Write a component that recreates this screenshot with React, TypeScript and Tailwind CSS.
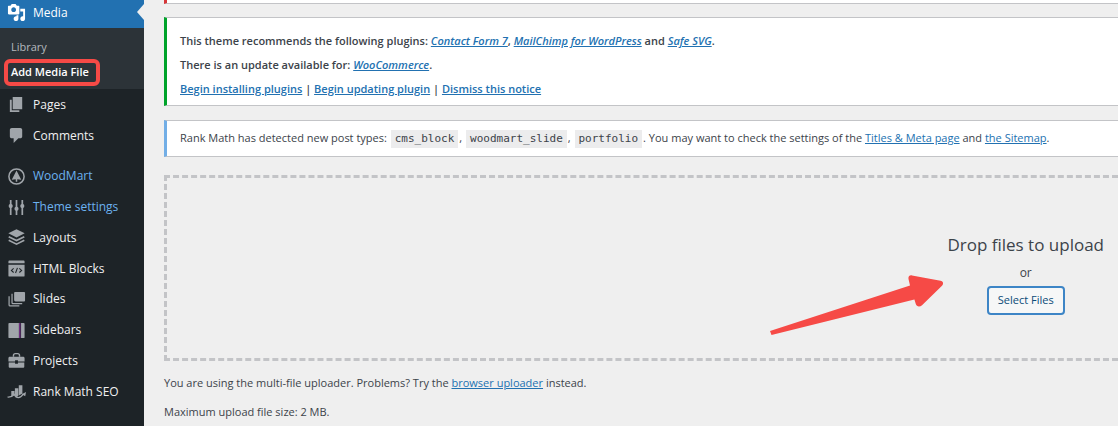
import React from 'react'
import clsx from 'clsx'

interface MenuItem {
  label: string
  icon: React.ReactNode
  highlighted?: boolean
}

interface NoticeProps {
  className?: string
  children?: React.ReactNode
}

const Icon: React.FC<{ children: React.ReactNode }> = ({ children }) => (
  <svg
    viewBox="0 0 20 20"
    className="size-[19px] shrink-0"
    fill="currentColor"
    aria-hidden="true"
  >
    {children}
  </svg>
)

const MediaIcon = () => (
  <Icon>
    <path d="M13 11V4c0-.55-.45-1-1-1h-1.67L9 1H5L3.67 3H2c-.55 0-1 .45-1 1v7c0 .55.45 1 1 1h10c.55 0 1-.45 1-1zM7 4.5c1.38 0 2.5 1.12 2.5 2.5S8.38 9.5 7 9.5 4.5 8.38 4.5 7 5.62 4.5 7 4.5zM14 6h5v10.5c0 1.38-1.12 2.5-2.5 2.5S14 17.88 14 16.5s1.12-2.5 2.5-2.5c.17 0 .34.02.5.05V9h-3V6zm-4 8.05V13h2v3.5c0 1.38-1.12 2.5-2.5 2.5S7 17.88 7 16.5 8.12 14 9.5 14c.17 0 .34.02.5.05z" />
  </Icon>
)

const contentItems: MenuItem[] = [
  {
    label: 'Pages',
    icon: (
      <Icon>
        <path d="M6 15V2h10v13H6zm-1 1h8v2H3V5h2v11z" />
      </Icon>
    ),
  },
  {
    label: 'Comments',
    icon: (
      <Icon>
        <path d="M5 2h9c1.1 0 2 .9 2 2v7c0 1.1-.9 2-2 2h-2l-5 5v-5H5c-1.1 0-2-.9-2-2V4c0-1.1.9-2 2-2z" />
      </Icon>
    ),
  },
]

const themeItems: MenuItem[] = [
  {
    label: 'WoodMart',
    highlighted: true,
    icon: (
      <Icon>
        <circle
          cx="10"
          cy="10"
          r="8"
          fill="none"
          stroke="currentColor"
          strokeWidth="1.6"
        />
        <path d="M10 3.6 5 13.4l4.2-.6v2.7h1.6v-2.7l4.2.6z" />
      </Icon>
    ),
  },
  {
    label: 'Theme settings',
    highlighted: true,
    icon: (
      <Icon>
        <path d="M3 2h1.8v4.2a2.4 2.4 0 0 1 0 4.2V18H3v-7.6a2.4 2.4 0 0 1 0-4.2zM9.1 2h1.8v7.2a2.4 2.4 0 0 1 0 4.2V18H9.1v-4.6a2.4 2.4 0 0 1 0-4.2zM15.2 2H17v4.2a2.4 2.4 0 0 1 0 4.2V18h-1.8v-7.6a2.4 2.4 0 0 1 0-4.2z" />
      </Icon>
    ),
  },
  {
    label: 'Layouts',
    icon: (
      <Icon>
        <path d="M10 1.2 18.6 5.6 10 10 1.4 5.6z" />
        <path
          d="M1.8 9.2 10 13.3l8.2-4.1M1.8 12.9 10 17l8.2-4.1"
          fill="none"
          stroke="currentColor"
          strokeWidth="1.8"
        />
      </Icon>
    ),
  },
  {
    label: 'HTML Blocks',
    icon: (
      <Icon>
        <path d="M2.5 1.5h15a1 1 0 0 1 1 1v2h-17v-2a1 1 0 0 1 1-1zM1.5 6h17v11.5a1 1 0 0 1-1 1h-15a1 1 0 0 1-1-1z" />
        <path
          d="M7 9.8 4.6 12 7 14.2M13 9.8l2.4 2.2-2.4 2.2M11 9.3l-2 5.4"
          fill="none"
          stroke="#1d2327"
          strokeWidth="1.1"
        />
      </Icon>
    ),
  },
  {
    label: 'Slides',
    icon: (
      <Icon>
        <path d="M8.5 2H18a1 1 0 0 1 1 1v8a1 1 0 0 1-1 1H9a1.5 1.5 0 0 1-1.500-1.500V3a1 1 0 0 1 1-1z" />
        <path
          d="M5.3 4v9.3a1 1 0 0 0 1 1H16M2.2 6.500v9.300a1 1 0 0 0 1 1H13"
          fill="none"
          stroke="currentColor"
          strokeWidth="1.3"
        />
      </Icon>
    ),
  },
  {
    label: 'Sidebars',
    icon: (
      <Icon>
        <path d="M2.5 2h10v16h-10a1 1 0 0 1-1-1V3a1 1 0 0 1 1-1zM14.800 2h2.700a1 1 0 0 1 1 1v14a1 1 0 0 1-1 1h-2.700z" />
        <path d="M12.900 2h1.200v16h-1.200z" fill="#8a2f9c" />
      </Icon>
    ),
  },
  {
    label: 'Projects',
    icon: (
      <Icon>
        <path
          d="M6.8 6V4.800c0-1.200 1-2 2-2h2.400c1 0 2 .8 2 2V6"
          fill="none"
          stroke="currentColor"
          strokeWidth="1.5"
        />
        <path d="M3 6h14c.9 0 1.5.6 1.5 1.500V11h-7V9.800h-3V11h-7V7.500C1.500 6.600 2.100 6 3 6zM1.800 12h6.700v1.300h3V12h6.700v4.500c0 .6-.4 1-1 1H2.800c-.6 0-1-.4-1-1z" />
      </Icon>
    ),
  },
  {
    label: 'Rank Math SEO',
    icon: (
      <Icon>
        <path d="M4.500 9.500h3.400v4l-3.400 1.500zM8.300 6.500h3.600v8L10 15.800l-1.700-1.500zM12.400 3.500h3.800v8.700l-3.800 2z" />
        <path
          d="M.5 15.800c3.500.4 5.300-.6 7.200-2.600 1 2.400 2.700 3.300 4.300 3.300 2.600 0 3.800-1.800 5.200-4"
          fill="none"
          stroke="currentColor"
          strokeWidth="1.3"
        />
        <path d="m15.500 12.800 4.500-2.300-.8 4.500z" />
      </Icon>
    ),
  },
]

const TextLink: React.FC<{ children: React.ReactNode }> = ({ children }) => (
  <a href="#" className="text-[#2271b1] underline">
    {children}
  </a>
)

const PostType: React.FC<{ children: React.ReactNode }> = ({ children }) => (
  <code className="mx-px inline-block bg-[#ececed] px-1 font-['DejaVu_Sans_Mono',monospace] text-[11px] leading-[18px]">
    {children}
  </code>
)

const Notice: React.FC<NoticeProps> = ({ className, children }) => (
  <div
    className={clsx(
      'border-y border-l-3 border-y-[#c3c4c7] bg-white px-[13px]',
      className,
    )}
  >
    {children}
  </div>
)

const MenuLink: React.FC<{ item: MenuItem }> = ({ item }) => (
  <li className="flex">
    <a href="#" className="flex flex-1 items-center gap-[7px] pl-[7px]">
      <span className="text-[#a0a5aa]">{item.icon}</span>
      <span className={item.highlighted ? 'text-[#6cb2f0]' : 'text-[#f0f0f1]'}>
        {item.label}
      </span>
    </a>
  </li>
)

const Sidebar = () => (
  <nav
    aria-label="Main menu"
    className="w-36 shrink-0 bg-[#1d2327] text-xs leading-[18px]"
  >
    <a
      href="#"
      className="relative flex h-7 items-center gap-[7px] bg-[#2271b1] pb-[3px] pl-[7px] text-white"
    >
      <MediaIcon />
      Media
      <span className="absolute top-1 right-0 border-y-8 border-r-7 border-y-transparent border-r-[#efefef]" />
    </a>
    <ul className="bg-[#2c3338] pt-[6px] pb-[5px] text-[11px]">
      <li className="flex h-[25px] items-center pl-[11px]">
        <a href="#" className="text-[#b4b9be]">
          Library
        </a>
      </li>
      <li className="relative flex h-[25px] items-center pl-[11px]">
        <a href="#" className="font-semibold text-white">
          Add Media File
        </a>
        <span className="pointer-events-none absolute top-0 left-1 h-[27px] w-24 rounded-md border-4 border-[#f64a46]" />
      </li>
    </ul>
    <ul className="grid h-[62px] auto-rows-fr">
      {contentItems.map((item) => (
        <MenuLink key={item.label} item={item} />
      ))}
    </ul>
    <ul className="mt-[10px] grid h-[246px] auto-rows-fr">
      {themeItems.map((item) => (
        <MenuLink key={item.label} item={item} />
      ))}
    </ul>
  </nav>
)

const DropZone = () => (
  <section className="relative mt-[18px] flex justify-end border-3 border-r-0 border-dashed border-[#c3c4c7] pt-[55px] pr-[14px] pb-[43px]">
    <div className="flex flex-col items-center">
      <p className="text-[17px] leading-6">Drop files to upload</p>
      <p className="mt-1 text-xs leading-6">or</p>
      <button
        type="button"
        className="mt-px h-[29px] rounded-[4px] border-2 border-[#3d85c6] bg-[#f6f7f7] px-[9px] text-[11px] text-[#0a4b78]"
      >
        Select Files
      </button>
    </div>
    <svg
      viewBox="768 270 177 70"
      className="absolute top-[92px] right-[173px] h-[70px] w-[177px]"
      aria-hidden="true"
    >
      <path
        d="M770 331 910 285.500 908.500 279c-.5-2.500 1-4 3.500-3.600l28.500 5.400c2.800.6 3.400 3.200 1.500 5l-20 19.500c-2.200 2-5.500 1.500-6.200-1.200L914.400 299.500 771.500 335z"
        fill="#f64a46"
      />
    </svg>
  </section>
)

export default function App() {
  return (
    <div className="flex min-h-screen overflow-hidden bg-[#efefef] font-['Open_Sans',sans-serif] text-[11px] text-[#3c434a]">
      <Sidebar />
      <main className="min-w-0 flex-1 pl-5">
        <Notice className="h-1 border-t-0 border-l-[#d63638]" />
        <Notice className="mt-[13px] border-l-[#00a32a] pt-[11px] pb-1 font-semibold">
          <p className="leading-6">
            This theme recommends the following plugins:{' '}
            <em>
              <TextLink>Contact Form 7</TextLink>
            </em>
            ,{' '}
            <em>
              <TextLink>MailChimp for WordPress</TextLink>
            </em>{' '}
            and{' '}
            <em>
              <TextLink>Safe SVG</TextLink>
            </em>
            .
          </p>
          <p className="leading-6">
            There is an update available for:{' '}
            <em>
              <TextLink>WooCommerce</TextLink>
            </em>
            .
          </p>
          <p className="leading-6">
            <TextLink>Begin installing plugins</TextLink> |{' '}
            <TextLink>Begin updating plugin</TextLink> |{' '}
            <TextLink>Dismiss this notice</TextLink>
          </p>
        </Notice>
        <Notice className="mt-[14px] border-l-[#72aee6] pt-[7px] pb-2">
          <p className="leading-5">
            Rank Math has detected new post types:{' '}
            <PostType>cms_block</PostType>, <PostType>woodmart_slide</PostType>,{' '}
            <PostType>portfolio</PostType>. You may want to check the settings
            of the <TextLink>Titles &amp; Meta page</TextLink> and{' '}
            <TextLink>the Sitemap</TextLink>.
          </p>
        </Notice>
        <DropZone />
        <p className="mt-3 leading-5">
          You are using the multi-file uploader. Problems? Try the{' '}
          <TextLink>browser uploader</TextLink> instead.
        </p>
        <p className="mt-[9px] leading-5">Maximum upload file size: 2 MB.</p>
      </main>
    </div>
  )
}
